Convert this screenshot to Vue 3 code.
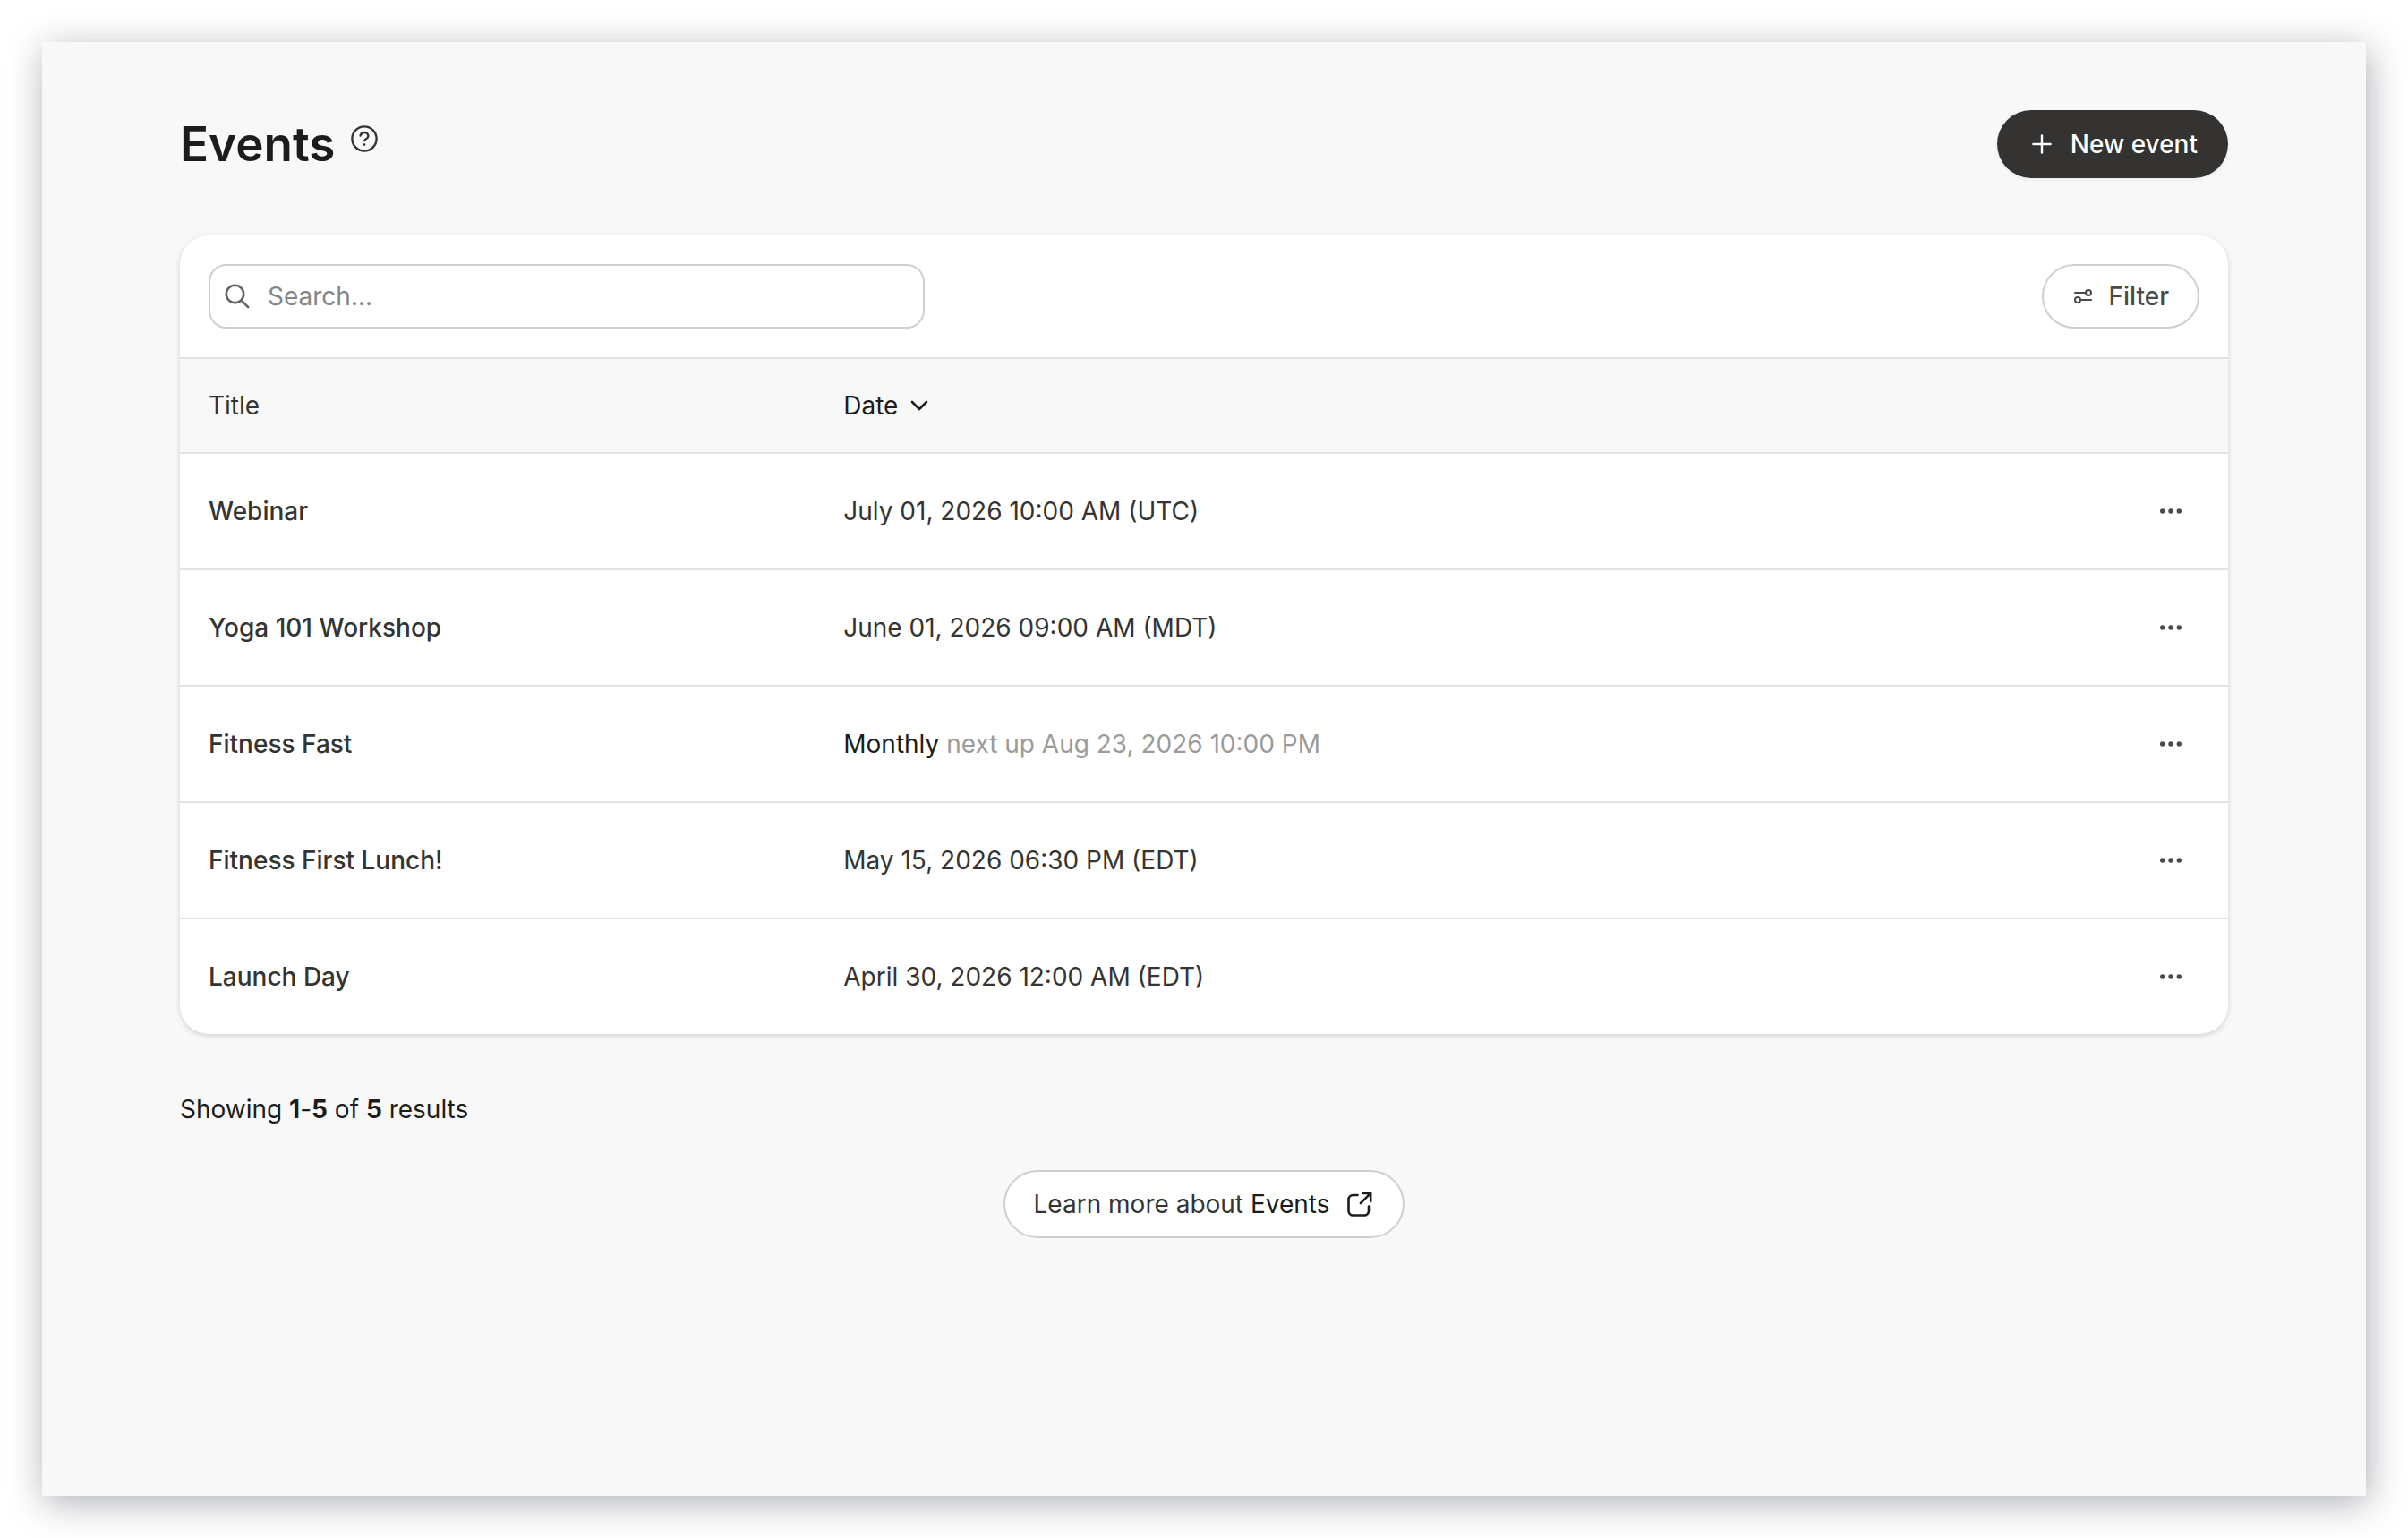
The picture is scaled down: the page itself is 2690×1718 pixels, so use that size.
<script setup>
const events = [
  { title: 'Webinar', date: 'July 01, 2026 10:00 AM (UTC)' },
  { title: 'Yoga 101 Workshop', date: 'June 01, 2026 09:00 AM (MDT)' },
  { title: 'Fitness Fast', repeat: 'Monthly', next: 'next up Aug 23, 2026 10:00 PM' },
  { title: 'Fitness First Lunch!', date: 'May 15, 2026 06:30 PM (EDT)' },
  { title: 'Launch Day', date: 'April 30, 2026 12:00 AM (EDT)' },
]
</script>

<template>
  <main class="panel">
    <header class="head">
      <div class="heading">
        <h1>Events</h1>
        <button class="help" type="button" aria-label="Help">
          <svg width="30" height="30" viewBox="0 0 30 30" fill="none" stroke="currentColor" stroke-width="2.4" stroke-linecap="round">
            <circle cx="15" cy="15" r="13.6" />
            <path d="M10.6 11.6c.5-2.2 2.2-3.6 4.4-3.6 2.5 0 4.4 1.700 4.400 4 0 3.200-3.600 3.100-4.200 5" />
            <circle cx="15" cy="21.600" r="1.400" fill="currentColor" stroke="none" />
          </svg>
        </button>
      </div>
      <button class="new" type="button">
        <svg width="24" height="24" viewBox="0 0 24 24" fill="none" stroke="currentColor" stroke-width="2.400" stroke-linecap="round">
          <path d="M12 2.400v19.200M2.400 12h19.200" />
        </svg>
        New event
      </button>
    </header>

    <section class="card">
      <div class="tools">
        <label class="search">
          <svg width="28" height="28" viewBox="0 0 28 28" fill="none" stroke="currentColor" stroke-width="2.600" stroke-linecap="round">
            <circle cx="11.500" cy="11.500" r="9.700" />
            <path d="M18.600 18.600L26.200 26.200" />
          </svg>
          <input type="search" placeholder="Search..." aria-label="Search events" />
        </label>
        <button class="filter" type="button">
          <svg width="20" height="16" viewBox="0 0 20 16" fill="none" stroke="currentColor" stroke-width="2" stroke-linecap="round">
            <circle cx="16" cy="4" r="3" />
            <path d="M1 4h12M7 12h12" />
            <circle cx="4" cy="12" r="3" />
          </svg>
          Filter
        </button>
      </div>
      <table>
        <thead>
          <tr>
            <th class="title-col" scope="col">Title</th>
            <th scope="col" aria-sort="descending">
              <button class="sort" type="button">
                Date
                <svg width="20" height="12" viewBox="0 0 20 12" fill="none" stroke="currentColor" stroke-width="2.600" stroke-linecap="round" stroke-linejoin="round">
                  <path d="M2 2l8 8 8-8" />
                </svg>
              </button>
            </th>
            <th class="menu-col" aria-label="Actions"></th>
          </tr>
        </thead>
        <tbody>
          <tr v-for="event in events" :key="event.title">
            <td class="name">{{ event.title }}</td>
            <td v-if="event.repeat"><span class="repeat">{{ event.repeat }}</span> <span class="next">{{ event.next }}</span></td>
            <td v-else>{{ event.date }}</td>
            <td class="menu-col">
              <button class="menu" type="button" :aria-label="'Actions for ' + event.title">
                <svg width="24" height="6" viewBox="0 0 24 6" fill="currentColor">
                  <circle cx="2.700" cy="3" r="2.700" />
                  <circle cx="12" cy="3" r="2.700" />
                  <circle cx="21.300" cy="3" r="2.700" />
                </svg>
              </button>
            </td>
          </tr>
        </tbody>
      </table>
    </section>

    <p class="count">Showing <b>1</b>-<b>5</b> of <b>5</b> results</p>

    <footer class="foot">
      <a class="learn" href="#events">
        <span>Learn more about <span class="topic">Events</span></span>
        <svg width="28" height="28" viewBox="0 0 28 28" fill="none" stroke="currentColor" stroke-width="2.600" stroke-linecap="round" stroke-linejoin="round">
          <path d="M11.500 4H6.500a5 5 0 0 0-5 5v12.500a5 5 0 0 0 5 5H19a5 5 0 0 0 5-5v-5" />
          <path d="M15 13L26 2M18 2h8.200v9" />
        </svg>
      </a>
    </footer>
  </main>
</template>

<style>
html {
  height: 100%;
}
body {
  min-height: 100%;
  margin: 0;
  display: flex;
  background: #fff;
}
#app {
  flex: 1;
  display: flex;
}
</style>

<style scoped>
.panel {
  flex: 1;
  box-sizing: border-box;
  margin: 47px;
  padding: 76px 154px;
  border-radius: 2px;
  background: #f8f8f8;
  box-shadow: 3px 8px 40px rgba(30, 36, 50, 0.36);
  color: #1c1c1a;
  font-family: Inter, 'Noto Sans', sans-serif;
  font-size: 28px;
  line-height: 40px;
}
button,
input {
  font: inherit;
  margin: 0;
}
button {
  display: inline-flex;
  align-items: center;
  box-sizing: border-box;
  padding: 0;
  border: 0;
  background: none;
  cursor: pointer;
}
svg {
  display: block;
  flex: none;
}
.head {
  display: flex;
  justify-content: space-between;
  align-items: center;
}
.heading {
  display: flex;
  align-items: flex-start;
  gap: 18px;
}
h1 {
  margin: 0;
  font-size: 53px;
  line-height: 64px;
  font-weight: 600;
}
.help {
  margin-top: 11px;
  color: #343432;
}
.new {
  height: 76px;
  padding: 0 34px 0 38px;
  gap: 20px;
  border-radius: 38px;
  background: #343331;
  color: #fff;
  font-weight: 500;
  box-shadow: 0 2px 4px rgba(0, 0, 0, 0.06);
}
.card {
  margin-top: 64px;
  border-radius: 32px;
  background: #fff;
  overflow: hidden;
  box-shadow: 0 2px 6px rgba(0, 0, 0, 0.16);
}
.tools {
  display: flex;
  justify-content: space-between;
  padding: 32px;
}
.search {
  display: flex;
  align-items: center;
  gap: 20px;
  box-sizing: border-box;
  width: 800px;
  height: 72px;
  padding: 0 16px;
  border: 2px solid #cfcfcf;
  border-radius: 20px;
  color: #646464;
}
.search input {
  flex: 1;
  padding: 0;
  border: 0;
  outline: 0;
  background: none;
  color: #343432;
}
.search input::placeholder {
  color: #858585;
  opacity: 1;
}
.filter {
  height: 72px;
  padding: 0 32px 0 34px;
  gap: 18px;
  border: 2px solid #cfcfcf;
  border-radius: 36px;
  color: #4a4a48;
  font-weight: 500;
}
table {
  width: 100%;
  border-collapse: separate;
  border-spacing: 0;
  table-layout: fixed;
}
th,
td {
  box-sizing: border-box;
  padding: 0 32px;
  border-top: 2px solid #e2e2e2;
  text-align: left;
  color: #343432;
}
th {
  height: 106px;
  background: #f8f8f8;
  font-weight: 400;
}
td {
  height: 130px;
}
.title-col {
  width: 31%;
}
.menu-col {
  width: 140px;
  padding-right: 52px;
}
.sort {
  gap: 14px;
  color: #1c1c1a;
}
.menu {
  display: flex;
  margin-left: auto;
  color: #4a4a48;
}
.name {
  font-weight: 500;
}
.repeat {
  color: #1c1c1a;
}
.next {
  color: #9b9b99;
}
.count {
  margin: 64px 0 0;
}
.count b {
  font-weight: 700;
}
.foot {
  display: flex;
  justify-content: center;
  margin-top: 48px;
}
.learn {
  display: flex;
  align-items: center;
  box-sizing: border-box;
  height: 76px;
  padding: 0 34px 0 32px;
  gap: 20px;
  border: 2px solid #cfcfcf;
  border-radius: 38px;
  background: #fff;
  color: #1c1c1a;
  text-decoration: none;
}
.learn > span {
  color: #343432;
}
.learn .topic {
  color: #1c1c1a;
}
</style>
